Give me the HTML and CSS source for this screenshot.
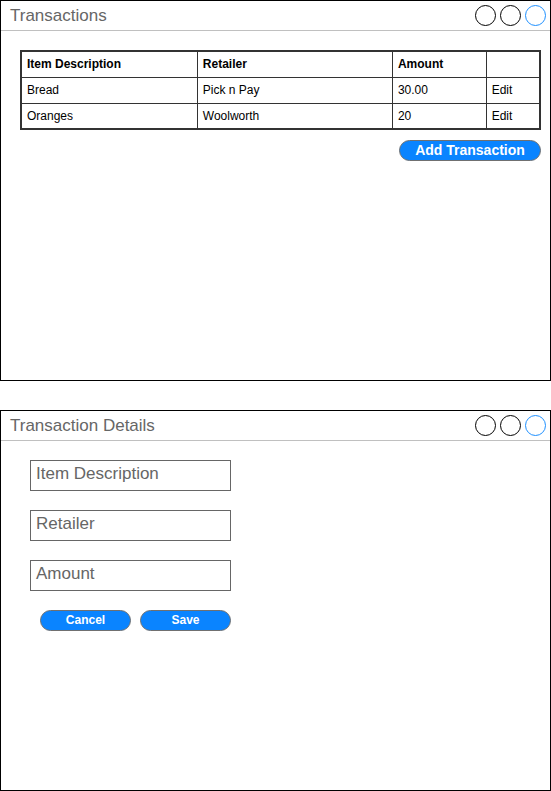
FILE: index.html
```html
<!DOCTYPE html>
<html>
<head>
<meta charset="utf-8">
<link rel="stylesheet" href="styles.css">
</head>
<body>
<div class="page">
  <section class="window">
    <header class="win-head">
      <span class="win-title">Transactions</span>
      <span class="controls">
        <span class="dot"></span><span class="dot"></span><span class="dot blue"></span>
      </span>
    </header>
    <div class="win-body list-body">
      <table class="tx">
        <colgroup>
          <col class="c1"><col class="c2"><col class="c3"><col class="c4">
        </colgroup>
        <thead>
          <tr><th>Item Description</th><th>Retailer</th><th>Amount</th><th></th></tr>
        </thead>
        <tbody>
          <tr><td>Bread</td><td>Pick n Pay</td><td>30.00</td><td>Edit</td></tr>
          <tr><td>Oranges</td><td>Woolworth</td><td>20</td><td>Edit</td></tr>
        </tbody>
      </table>
      <div class="actions">
        <button class="btn btn-add">Add Transaction</button>
      </div>
    </div>
  </section>

  <section class="window">
    <header class="win-head">
      <span class="win-title">Transaction Details</span>
      <span class="controls">
        <span class="dot"></span><span class="dot"></span><span class="dot blue"></span>
      </span>
    </header>
    <div class="win-body form-body">
      <div class="field">Item Description</div>
      <div class="field">Retailer</div>
      <div class="field">Amount</div>
      <div class="form-actions">
        <button class="btn btn-small">Cancel</button>
        <button class="btn btn-small">Save</button>
      </div>
    </div>
  </section>
</div>
</body>
</html>
```

FILE: styles.css
```css
* { box-sizing: border-box; }
html, body { margin: 0; padding: 0; background: #fff; }
body { font-family: "Liberation Sans", Arial, sans-serif; }

.page {
  display: flex;
  flex-direction: column;
  gap: 29px;
  width: 551px;
}

.window {
  width: 551px;
  height: 381px;
  border: 1px solid #000;
  display: flex;
  flex-direction: column;
}

.win-head {
  height: 30px;
  border-bottom: 1px solid #c0c0c0;
  display: flex;
  align-items: center;
  justify-content: space-between;
  padding: 0 4px 0 9px;
  flex: none;
}

.win-title {
  font-size: 17px;
  color: #666;
  line-height: 20px;
  padding-top: 1px;
}

.controls {
  display: flex;
  gap: 4px;
  align-items: center;
}

.dot {
  width: 21px;
  height: 21px;
  border-radius: 50%;
  border: 1px solid #000;
  display: block;
}
.dot.blue { border-color: #1e90ff; }

.list-body {
  padding: 19px 9px 0 19px;
}

.tx {
  width: 521px;
  border-collapse: collapse;
  border: 2px solid #333;
  font-size: 12px;
  color: #000;
}
.tx col.c1 { width: 177px; }
.tx col.c2 { width: 196px; }
.tx col.c3 { width: 94px; }
.tx col.c4 { width: 54px; }

.tx th, .tx td {
  border: 1px solid #333;
  height: 26px;
  padding: 0 5px;
  text-align: left;
  vertical-align: middle;
}
.tx th { font-weight: bold; }

.actions {
  display: flex;
  justify-content: flex-end;
  margin-top: 10px;
}

.btn {
  background: #0a84ff;
  color: #fff;
  border: 1px solid #707070;
  border-radius: 11px;
  font-family: "Liberation Sans", Arial, sans-serif;
  font-weight: bold;
  padding: 0;
  cursor: pointer;
}

.btn-add {
  width: 142px;
  height: 21px;
  font-size: 14px;
  line-height: 19px;
}

.form-body {
  padding: 19px 0 0 29px;
  display: flex;
  flex-direction: column;
  gap: 19px;
}

.field {
  width: 201px;
  height: 31px;
  border: 1px solid #666;
  font-size: 17px;
  color: #666;
  padding: 3px 0 0 5px;
  line-height: 20px;
}

.form-actions {
  display: flex;
  gap: 9px;
  padding-left: 10px;
}

.btn-small {
  width: 91px;
  height: 21px;
  font-size: 12px;
  line-height: 19px;
}
```
